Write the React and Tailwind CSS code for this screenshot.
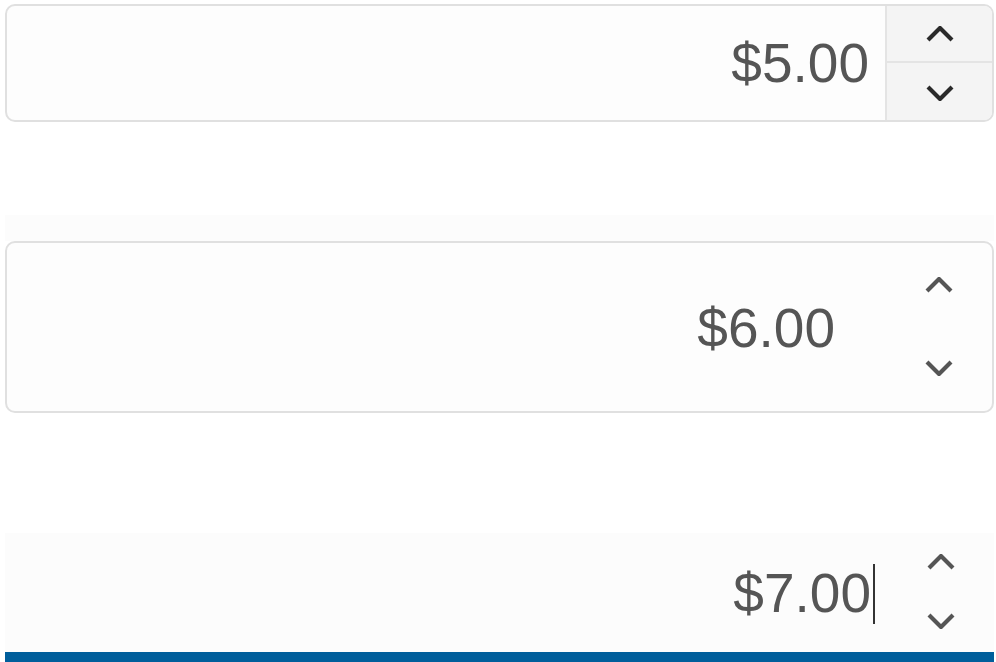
function Chevron({ dir = "up", color = "#555" }) {
  const pts = dir === "up" ? "2,14 14,2 26,14" : "2,2 14,14 26,2";
  return (
    <svg width="28" height="16" viewBox="0 0 28 16" className="block">
      <polyline points={pts} fill="none" stroke={color} strokeWidth="4.2" strokeLinejoin="miter" />
    </svg>
  );
}

const font = { fontFamily: '"Liberation Sans", Arial, sans-serif' };

export default function App() {
  return (
    <div className="min-h-[662px] w-[996px] bg-white pl-[5px] pr-[2px] pt-[4px]" style={font}>
      {/* stepper with button column */}
      <div className="flex h-[118px] overflow-hidden rounded-[10px] border-2 border-[#e0e0e0] bg-[#fdfdfd]">
        <div className="flex flex-1 items-center justify-end pr-[16px] text-[55px] leading-none text-[#555]">
          $5.00
        </div>
        <div className="flex w-[107px] flex-col border-l-2 border-[#e4e4e4] bg-[#f4f4f4]">
          <div className="flex flex-1 items-center justify-center border-b-2 border-[#e4e4e4]">
            <Chevron dir="up" color="#2a2a2a" />
          </div>
          <div className="flex flex-1 items-center justify-center pt-[2px]">
            <Chevron dir="down" color="#2a2a2a" />
          </div>
        </div>
      </div>

      <div className="mt-[93px] h-[26px] bg-[#fcfcfc]" />

      {/* outlined stepper */}
      <div className="flex h-[172px] rounded-[10px] border-2 border-[#e0e0e0] bg-[#fdfdfd]">
        <div className="flex flex-1 items-center justify-end pr-[51px] pt-[2px] text-[55px] leading-none text-[#555]">
          $6.00
        </div>
        <div className="flex w-[106px] flex-col items-center justify-between pb-[35px] pt-[34px]">
          <Chevron dir="up" />
          <Chevron dir="down" />
        </div>
      </div>

      {/* focused underline stepper */}
      <div className="mt-[120px] flex h-[129px] flex-col bg-[#fcfcfc]">
        <div className="flex flex-1">
          <div className="flex flex-1 items-center justify-end pr-[13px] pt-[2px] text-[55px] leading-none text-[#555]">
            <span>$7.00</span>
            <span className="ml-[2px] h-[60px] w-[2px] bg-[#333]" />
          </div>
          <div className="flex w-[106px] flex-col items-center justify-between pb-[23px] pt-[21px]">
            <Chevron dir="up" />
            <Chevron dir="down" />
          </div>
        </div>
        <div className="h-[10px] bg-[#005e9b]" />
      </div>
    </div>
  );
}
